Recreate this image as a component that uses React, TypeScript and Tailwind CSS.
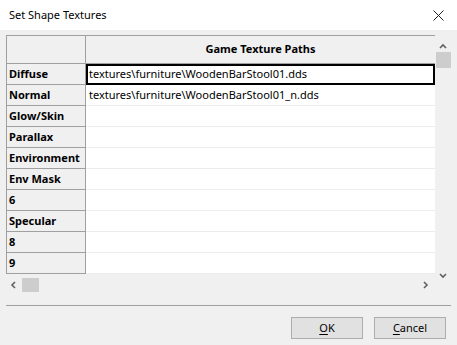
const rows = [
  { label: 'Diffuse', path: 'textures\\furniture\\WoodenBarStool01.dds', selected: true },
  { label: 'Normal', path: 'textures\\furniture\\WoodenBarStool01_n.dds' },
  { label: 'Glow/Skin', path: '' },
  { label: 'Parallax', path: '' },
  { label: 'Environment', path: '' },
  { label: 'Env Mask', path: '' },
  { label: '6', path: '' },
  { label: 'Specular', path: '' },
  { label: '8', path: '' },
  { label: '9', path: '' },
];

function Chevron({ dir }: { dir: 'up' | 'down' | 'left' | 'right' }) {
  const d = {
    up: 'M1 5 L4 2 L7 5',
    down: 'M1 2 L4 5 L7 2',
    left: 'M5 1 L2 4 L5 7',
    right: 'M2 1 L5 4 L2 7',
  }[dir];
  return (
    <svg width="8" height="8" viewBox="0 0 8 8" className="block">
      <path d={d} fill="none" stroke="#606060" strokeWidth="1.6" />
    </svg>
  );
}

export default function App() {
  return (
    <div
      className="w-[457px] h-[345px] bg-[#f0f0f0] text-black text-[11px] overflow-hidden"
      style={{ fontFamily: '"Noto Sans", "Open Sans", sans-serif' }}
    >
      <div className="h-[30px] bg-white flex items-center justify-between pl-[9px] pr-[9px]">
        <span className="text-[11px]">Set Shape Textures</span>
        <svg width="11" height="11" viewBox="0 0 11 11" className="mr-[4px]">
          <path d="M0.5 0.5 L10.5 10.5 M10.5 0.5 L0.5 10.5" stroke="#222" strokeWidth="1" />
        </svg>
      </div>

      <div className="pl-[6px] pt-[5px]">
        <div className="flex w-[445px]">
          <div className="w-[429px] flex flex-col">
            <div className="flex h-[29px] border-t border-[#a0a0a0]">
              <div className="w-[80px] bg-[#f0f0f0] border-l border-r border-b border-[#a0a0a0]" />
              <div className="flex-1 bg-[#f0f0f0] border-b border-[#a0a0a0] flex items-center justify-center font-bold">
                Game Texture Paths
              </div>
            </div>
            {rows.map((r) => (
              <div key={r.label} className="flex h-[21px]">
                <div className="w-[80px] bg-[#f0f0f0] border-l border-r border-b border-[#a0a0a0] flex items-center pl-[2px] font-bold">
                  {r.label}
                </div>
                <div
                  className={
                    r.selected
                      ? 'flex-1 bg-white border-2 border-black flex items-center pl-[1px]'
                      : 'flex-1 bg-white border-b border-[#ececec] flex items-center pl-[3px]'
                  }
                >
                  {r.path}
                </div>
              </div>
            ))}
            <div className="h-[21px] flex items-center">
              <div className="w-[16px] flex justify-center">
                <Chevron dir="left" />
              </div>
              <div className="w-[17px] h-[14px] bg-[#cdcdcd]" />
              <div className="flex-1" />
              <div className="w-[16px] flex justify-center mr-[1px]">
                <Chevron dir="right" />
              </div>
            </div>
          </div>
          <div className="w-[16px] flex flex-col items-center bg-[#f0f0f0]">
            <div className="h-[17px] flex items-end pb-[1px]">
              <Chevron dir="up" />
            </div>
            <div className="w-[15px] h-[16px] bg-[#cdcdcd]" />
            <div className="flex-1" />
            <div className="h-[24px] flex items-start pt-[1px]">
              <Chevron dir="down" />
            </div>
          </div>
        </div>

        <div className="w-[445px] h-px bg-[#a0a0a0] mt-[10px]" />

        <div className="flex justify-end gap-[11px] w-[440px] mt-[11px]">
          <button className="w-[72px] h-[22px] bg-[#e1e1e1] border border-[#adadad] flex items-center justify-center">
            <span><span className="underline underline-offset-2">O</span>K</span>
          </button>
          <button className="w-[72px] h-[22px] bg-[#e1e1e1] border border-[#adadad] flex items-center justify-center">
            <span><span className="underline underline-offset-2">C</span>ancel</span>
          </button>
        </div>
      </div>
    </div>
  );
}
